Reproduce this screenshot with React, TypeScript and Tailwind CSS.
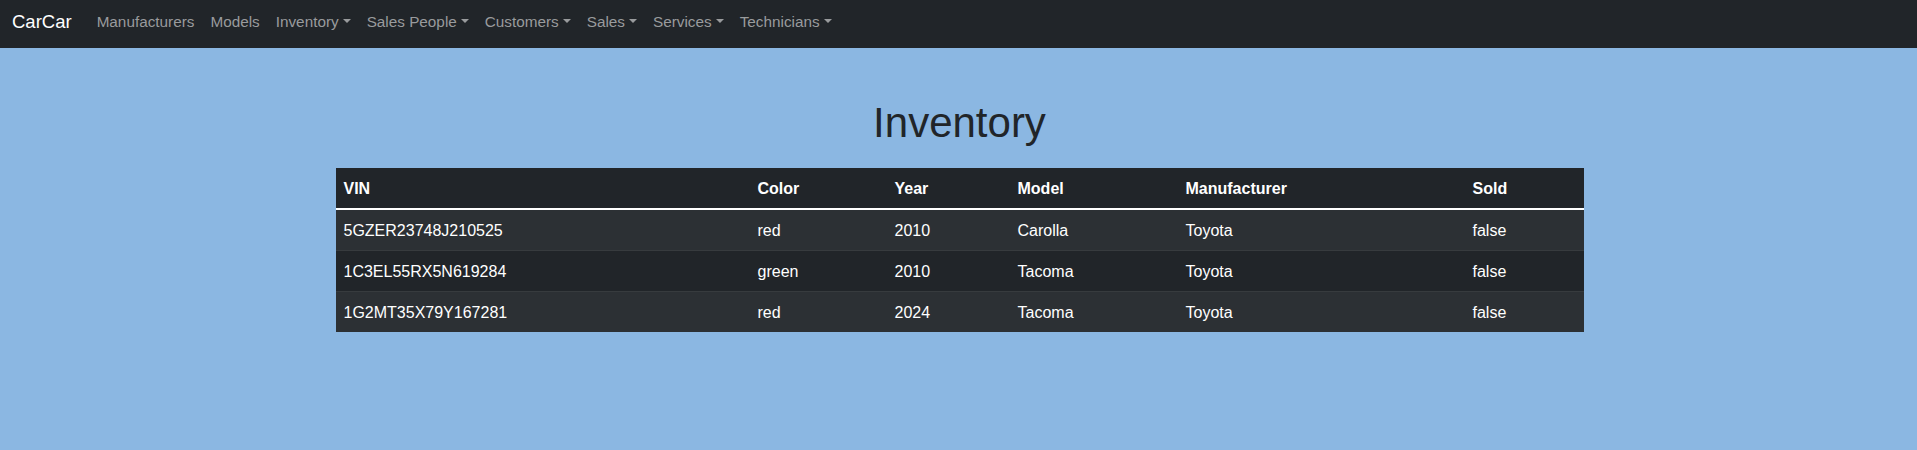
const navItems = [
  { label: 'Manufacturers', dropdown: false },
  { label: 'Models', dropdown: false },
  { label: 'Inventory', dropdown: true },
  { label: 'Sales People', dropdown: true },
  { label: 'Customers', dropdown: true },
  { label: 'Sales', dropdown: true },
  { label: 'Services', dropdown: true },
  { label: 'Technicians', dropdown: true },
]

const autos = [
  { vin: '5GZER23748J210525', color: 'red', year: 2010, model: 'Carolla', manufacturer: 'Toyota', sold: false },
  { vin: '1C3EL55RX5N619284', color: 'green', year: 2010, model: 'Tacoma', manufacturer: 'Toyota', sold: false },
  { vin: '1G2MT35X79Y167281', color: 'red', year: 2024, model: 'Tacoma', manufacturer: 'Toyota', sold: false },
]

function Nav() {
  return (
    <nav className="h-12 bg-[#212529] flex items-start pt-[4px] pl-3">
      <a className="text-[18.5px] leading-[36px] text-white mr-[17px]">CarCar</a>
      <ul className="flex">
        {navItems.map((item) => (
          <li key={item.label}>
            <a className="flex items-center px-2 text-[15.3px] leading-[36px] text-[#999b9d]">
              {item.label}
              {item.dropdown && (
                <span className="ml-[4px] mb-[2px] w-0 h-0 border-t-[4px] border-t-[#999b9d] border-x-[4px] border-x-transparent" />
              )}
            </a>
          </li>
        ))}
      </ul>
    </nav>
  )
}

export default function App() {
  return (
    <div className="min-h-[450px] bg-[#8bb7e2] font-['Liberation_Sans',Arial,sans-serif]">
      <Nav />
      <div className="w-[1248px] mx-auto pt-[51px] translate-x-[1px]">
        <h1 className="text-center text-[42px] leading-[48px] font-medium text-[#212529] mb-[21px]">
          Inventory
        </h1>
        <table className="w-full text-[16px] leading-6 text-white border-collapse">
          <thead>
            <tr className="bg-[#212529] border-b-2 border-white">
              <th className="w-[414px] text-left font-bold px-2 pt-[9px] pb-[7px]">VIN</th>
              <th className="w-[137px] text-left font-bold px-2 pt-[9px] pb-[7px]">Color</th>
              <th className="w-[123px] text-left font-bold px-2 pt-[9px] pb-[7px]">Year</th>
              <th className="w-[168px] text-left font-bold px-2 pt-[9px] pb-[7px]">Model</th>
              <th className="w-[287px] text-left font-bold px-2 pt-[9px] pb-[7px]">Manufacturer</th>
              <th className="text-left font-bold px-2 pt-[9px] pb-[7px]">Sold</th>
            </tr>
          </thead>
          <tbody>
            {autos.map((auto, i) => (
              <tr
                key={auto.vin}
                className={`${i % 2 === 0 ? 'bg-[#2c3034]' : 'bg-[#212529]'} ${i < autos.length - 1 ? 'border-b border-[#373b3e]' : ''}`}
              >
                <td className="px-2 pt-[9px] pb-[7px]">{auto.vin}</td>
                <td className="px-2 pt-[9px] pb-[7px]">{auto.color}</td>
                <td className="px-2 pt-[9px] pb-[7px]">{auto.year}</td>
                <td className="px-2 pt-[9px] pb-[7px]">{auto.model}</td>
                <td className="px-2 pt-[9px] pb-[7px]">{auto.manufacturer}</td>
                <td className="px-2 pt-[9px] pb-[7px]">{auto.sold ? 'true' : 'false'}</td>
              </tr>
            ))}
          </tbody>
        </table>
      </div>
    </div>
  )
}
